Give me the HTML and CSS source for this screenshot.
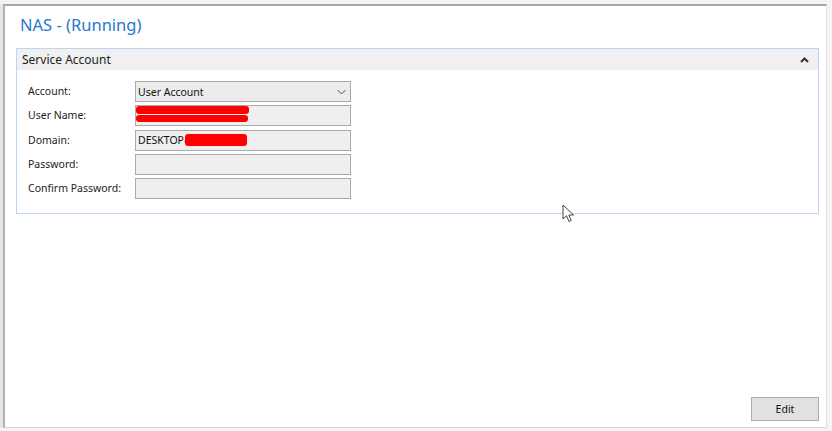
FILE: index.html
```html
<!DOCTYPE html>
<html>
<head>
<meta charset="utf-8">
<link rel="stylesheet" href="styles.css">
</head>
<body>
<div class="window">
  <h1 class="title">NAS - (Running)</h1>
  <section class="group">
    <div class="group-header">
      <span>Service Account</span>
      <svg class="caret" width="9" height="6" viewBox="0 0 9 6"><path d="M1 5 L4.5 1.5 L8 5" fill="none" stroke="#333" stroke-width="2"/></svg>
    </div>
    <div class="form">
      <label class="label">Account:</label>
      <div class="field combo"><span>User Account</span>
        <svg class="chev" width="9" height="6" viewBox="0 0 9 6"><path d="M0.5 1 L4.5 5 L8.5 1" fill="none" stroke="#555" stroke-width="1"/></svg>
      </div>
      <label class="label">User Name:</label>
      <div class="field redacted-user"><span class="red r1"></span><span class="red r2"></span></div>
      <label class="label">Domain:</label>
      <div class="field"><span>DESKTOP-</span><span class="red r3"></span></div>
      <label class="label">Password:</label>
      <div class="field"></div>
      <label class="label">Confirm Password:</label>
      <div class="field"></div>
    </div>
  </section>
  <div class="spacer"></div>
  <div class="actions"><button class="btn">Edit</button></div>
  <svg class="cursor" width="14" height="20" viewBox="0 0 14 20"><path d="M1 1 L1 15 L4.5 11.8 L7 17.5 L9.2 16.5 L6.8 11 L11.5 11 Z" fill="#fff" stroke="#444" stroke-width="1"/></svg>
</div>
</body>
</html>
```
FILE: styles.css
```css
html, body { margin: 0; padding: 0; }
body {
  background: #f4f4f4;
  width: 832px;
  height: 431px;
  overflow: hidden;
  font-family: "Noto Sans", "Open Sans", sans-serif;
}
.window {
  position: relative;
  box-sizing: border-box;
  margin: 4px 0 0 3px;
  width: 824px;
  height: 424px;
  background: #fff;
  border-left: 2px solid #b2b2b2;
  border-top: 2px solid #a8a8a8;
  border-right: 1px solid #e2e2e2;
  border-bottom: 1px solid #d6d6d6;
  box-shadow: -3px 0 0 #e6e6e6;
  display: flex;
  flex-direction: column;
  padding: 8px 7px 6px 11px;
}
.title {
  margin: 0 0 12px 4px;
  font-weight: normal;
  font-size: 16.5px;
  line-height: 22px;
  color: #2878cf;
}
.group {
  border: 1px solid #bcd5f3;
  padding: 0 0 14px 0;
}
.group-header {
  height: 21px;
  background: #f0f0f0;
  display: flex;
  align-items: center;
  justify-content: space-between;
  padding: 0 9px 0 5px;
  font-size: 12px;
  color: #222;
}
.caret { display: block; }
.form {
  display: grid;
  grid-template-columns: 107px 216px;
  row-gap: 3.25px;
  padding: 11px 0 0 11px;
}
.label {
  font-size: 10.5px;
  color: #222;
  line-height: 21px;
}
.field {
  position: relative;
  box-sizing: border-box;
  height: 21px;
  border: 1px solid #a9a9a9;
  background: #efefef;
  display: flex;
  align-items: center;
  padding: 0 2px;
  font-size: 10.5px;
  color: #111;
}
.combo { justify-content: space-between; padding-right: 4px; background: #ececec; }
.chev { display: block; }
.red { display: block; background: #f00; border-radius: 3px; }
.redacted-user { flex-direction: column; align-items: flex-start; justify-content: center; gap: 1px; padding: 0; }
.r1 { width: 113px; height: 8px; margin-top: -4px; }
.r2 { width: 112px; height: 7px; }
.r3 { width: 62px; height: 12px; margin-left: -2px; }
.spacer { flex: 1; }
.actions { display: flex; justify-content: flex-end; }
.btn {
  width: 68px;
  height: 24px;
  background: #e1e1e1;
  border: 1px solid #adadad;
  font-family: inherit;
  font-size: 10.5px;
  color: #111;
  padding: 0;
}
.cursor { position: absolute; left: 557px; top: 198px; }
```
